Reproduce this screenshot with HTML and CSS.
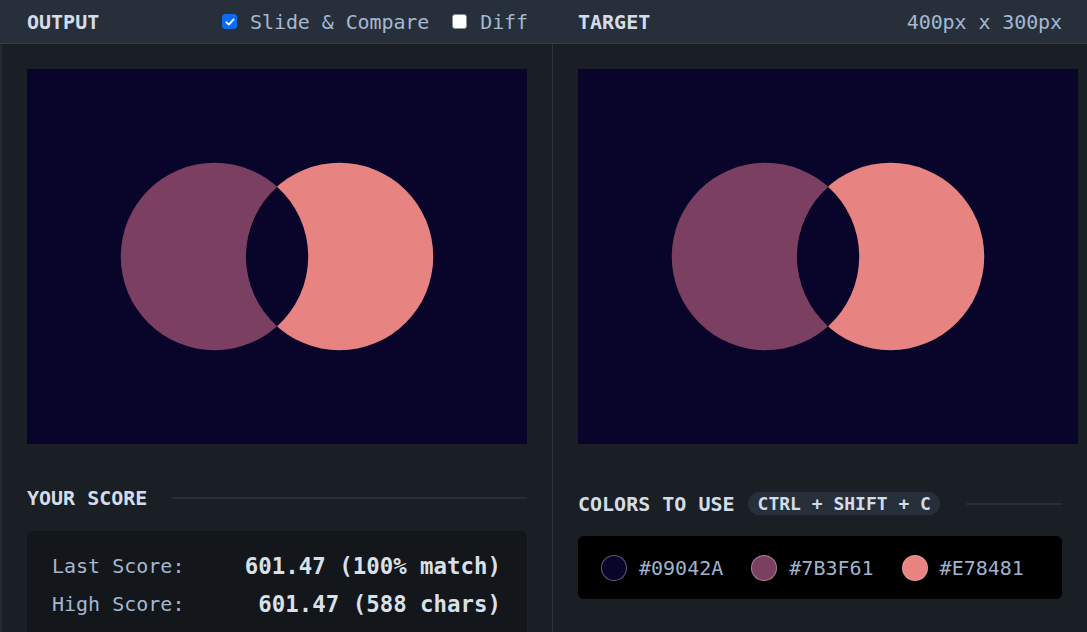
FILE: index.html
```html
<!DOCTYPE html>
<html>
<head>
<meta charset="utf-8">
<link rel="stylesheet" href="styles.css">
</head>
<body>
<div class="app">
  <header class="topbar">
    <div class="bar-left">
      <span class="title">OUTPUT</span>
      <div class="toggles">
        <label class="toggle">
          <span class="box checked"><svg viewBox="0 0 16 16" width="12" height="12"><path d="M3.2 8.4 L6.5 11.5 L12.8 4.6" fill="none" stroke="#fff" stroke-width="2.4" stroke-linecap="round" stroke-linejoin="round"/></svg></span>
          <span class="toggle-text">Slide &amp; Compare</span>
        </label>
        <label class="toggle">
          <span class="box"></span>
          <span class="toggle-text">Diff</span>
        </label>
      </div>
    </div>
    <div class="bar-right">
      <span class="title">TARGET</span>
      <span class="dims">400px x 300px</span>
    </div>
  </header>
  <main class="panels">
    <section class="panel panel-left">
      <div class="canvas">
        <svg viewBox="0 0 400 300" width="500" height="375">
          <rect width="400" height="300" fill="#09042A"/>
          <circle cx="150" cy="150" r="75" fill="#7B3F61"/>
          <circle cx="250" cy="150" r="75" fill="#E78481"/>
          <path d="M200 94.1 A75 75 0 0 1 200 205.9 A75 75 0 0 1 200 94.1 Z" fill="#09042A"/>
        </svg>
      </div>
      <div class="section-head score-head">
        <span class="section-title">YOUR SCORE</span>
        <span class="rule"></span>
      </div>
      <div class="score-box">
        <div class="score-row"><span class="label">Last Score:</span><span class="value">601.47 (100% match)</span></div>
        <div class="score-row"><span class="label">High Score:</span><span class="value">601.47 (588 chars)</span></div>
      </div>
    </section>
    <section class="panel panel-right">
      <div class="canvas">
        <svg viewBox="0 0 400 300" width="500" height="375">
          <rect width="400" height="300" fill="#09042A"/>
          <circle cx="150" cy="150" r="75" fill="#7B3F61"/>
          <circle cx="250" cy="150" r="75" fill="#E78481"/>
          <path d="M200 94.1 A75 75 0 0 1 200 205.9 A75 75 0 0 1 200 94.1 Z" fill="#09042A"/>
        </svg>
      </div>
      <div class="section-head colors-head">
        <span class="section-title">COLORS TO USE</span>
        <span class="badge">CTRL + SHIFT + C</span>
        <span class="rule"></span>
      </div>
      <div class="colors-box">
        <div class="swatch-item"><span class="swatch sw1"></span><span class="hex">#09042A</span></div>
        <div class="swatch-item"><span class="swatch sw2"></span><span class="hex">#7B3F61</span></div>
        <div class="swatch-item"><span class="swatch sw3"></span><span class="hex">#E78481</span></div>
      </div>
    </section>
  </main>
</div>
</body>
</html>
```

FILE: styles.css
```css
html, body {
  margin: 0;
  padding: 0;
}
body {
  width: 1087px;
  height: 632px;
  overflow: hidden;
  background: #1a1e25;
  font-family: "DejaVu Sans Mono", "Liberation Mono", monospace;
  font-size: 20px;
  color: #a4b8d2;
}
.app {
  display: flex;
  flex-direction: column;
}
.topbar {
  display: grid;
  grid-template-columns: 553px 534px;
  height: 43px;
  background: #27303a;
  border-bottom: 1px solid #333d48;
}
.bar-left {
  display: flex;
  align-items: center;
  justify-content: space-between;
  padding: 0 25px 0 27px;
}
.bar-right {
  display: flex;
  align-items: center;
  justify-content: space-between;
  padding: 0 25px 0 25px;
}
.title {
  font-weight: bold;
  color: #d3dce8;
}
.toggles {
  display: flex;
  align-items: center;
  gap: 23px;
}
.toggle {
  display: flex;
  align-items: center;
  gap: 13px;
}
.toggle-text {
  color: #a4b8d2;
  letter-spacing: -0.1px;
}
.box {
  width: 13px;
  height: 13px;
  border: 1px solid #8a8f96;
  border-radius: 3px;
  background: #ffffff;
  display: flex;
  align-items: center;
  justify-content: center;
}
.box.checked {
  background: #0a6cf5;
  border-color: #0a6cf5;
}
.dims {
  color: #a4b8d2;
  letter-spacing: -0.1px;
}
.panels {
  display: grid;
  grid-template-columns: 553px 534px;
}
.panel {
  padding-top: 25px;
  min-width: 0;
}
.panel-left {
  padding-left: 25px;
  padding-right: 25px;
  border-left: 2px solid #232a33;
  border-right: 1px solid #2b3540;
}
.panel-right {
  padding-left: 25px;
  padding-right: 25px;
}
.canvas {
  width: 500px;
  height: 375px;
}
.canvas svg {
  display: block;
}
.section-head {
  display: flex;
  align-items: center;
}
.score-head {
  margin-top: 42px;
  height: 24px;
}
.colors-head {
  margin-top: 48px;
  height: 23px;
}
.section-title {
  font-weight: bold;
  color: #d3dce8;
  white-space: nowrap;
}
.rule {
  flex: 1;
  height: 2px;
  background: #272e37;
  margin-left: 25px;
}
.colors-head .rule {
  margin-left: 26px;
}
.badge {
  margin-left: 13px;
  height: 23px;
  line-height: 23px;
  padding: 0 9px 0 10px;
  border-radius: 12px;
  background: #27303a;
  font-size: 18px;
  font-weight: bold;
  color: #d3dce8;
  white-space: nowrap;
}
.score-box {
  margin-top: 21px;
  background: #13161b;
  border-radius: 6px;
  padding: 16px 26px 20px 25px;
}
.score-row {
  display: flex;
  justify-content: space-between;
  align-items: center;
  height: 38px;
}
.label {
  color: #a4b8d2;
}
.value {
  font-size: 22.4px;
  font-weight: bold;
  color: #d8e0ea;
}
.colors-box {
  margin-top: 21px;
  width: 484px;
  box-sizing: border-box;
  height: 63px;
  background: #000000;
  border-radius: 6px;
  padding: 0 23px;
  display: flex;
  align-items: center;
  gap: 28px;
}
.swatch-item {
  display: flex;
  align-items: center;
  gap: 12px;
}
.swatch {
  width: 24px;
  height: 24px;
  border-radius: 50%;
  border: 1px solid rgba(255, 255, 255, 0.35);
}
.sw1 { background: #09042A; }
.sw2 { background: #7B3F61; }
.sw3 { background: #E78481; border-color: rgba(255,255,255,0.15); }
.hex {
  color: #9fb3ce;
}
```
